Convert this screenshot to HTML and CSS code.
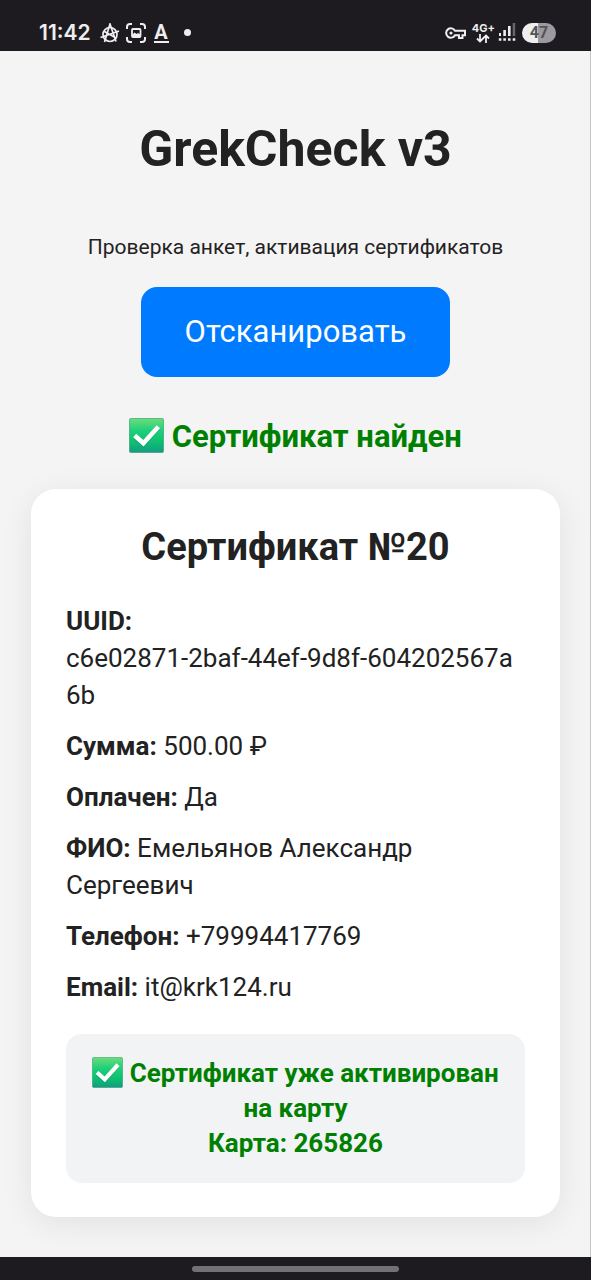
FILE: index.html
```html
<!DOCTYPE html>
<html lang="ru">
<head>
<meta charset="utf-8">
<meta name="viewport" content="width=device-width, initial-scale=1">
<title>GrekCheck v3</title>
<link rel="stylesheet" href="styles.css">
</head>
<body>
<svg class="defs" aria-hidden="true">
  <defs>
    <linearGradient id="check-fill" x1="0" y1="0" x2="0" y2="1">
      <stop offset="0" stop-color="#6ddc7a"/>
      <stop offset="0.35" stop-color="#1fd07b"/>
      <stop offset="0.7" stop-color="#0cc070"/>
      <stop offset="1" stop-color="#159a84"/>
    </linearGradient>
    <symbol id="check" viewBox="0 0 34 34">
      <rect x="0.5" y="0.5" width="33" height="33" rx="1.5" fill="url(#check-fill)" stroke="#2a9a68" stroke-opacity="0.6"/>
      <path d="M5.5 18.5 14 26 28.5 9.5" fill="none" stroke="#0b9862" stroke-width="4.5" opacity="0.5"/>
      <path d="M5.5 17 14 24.5 28.5 8.5" fill="none" stroke="#fff" stroke-width="4.5"/>
    </symbol>
  </defs>
</svg>

<header class="statusbar">
  <div class="statusbar-group">
    <span class="clock">11:42</span>
    <svg width="20" height="20" viewBox="0 0 20 20" fill="none" stroke="#eee" stroke-width="1.7">
      <circle cx="10" cy="11.500" r="7"/>
      <path d="M4.500 19 10 1 16 18.500M.5 14.500 19 8M3.500 8 16 15"/>
    </svg>
    <svg width="20" height="20" viewBox="0 0 20 20" fill="none" stroke="#eee" stroke-width="2">
      <path d="M1 6V4a3 3 0 0 1 3-3h2M14 1h2a3 3 0 0 1 3 3v2M19 14v2a3 3 0 0 1-3 3h-2M6 19H4a3 3 0 0 1-3-3v-2"/>
      <rect x="6" y="6" width="8.500" height="8" rx="1" stroke-width="1.800"/>
      <path d="M6 14v-2l2.500-2.500 2 1.500 1.500-1 2.500 1.500V14z" fill="#eee" stroke="none"/>
    </svg>
    <span class="letter">A</span>
    <span class="dot"></span>
  </div>
  <div class="statusbar-group">
    <svg width="21" height="14" viewBox="0 0 21 14" fill="none" stroke="#eee" stroke-width="2">
      <path d="M10 4.800A4.700 4.700 0 1 0 10 9.200h4V12h3.500V9.200H20V4.800z"/>
      <circle cx="6" cy="7" r="1.600" fill="#eee" stroke="none"/>
    </svg>
    <div class="network">
      <span class="network-label">4G+</span>
      <svg width="14" height="9" viewBox="0 0 14 9" fill="none" stroke="#eee" stroke-width="1.800">
        <path d="M4 0v7M1 4.500 4 7.500l3-3M10 9V2M7 4.500l3-3 3 3"/>
      </svg>
    </div>
    <svg class="icon-signal" width="18" height="19" viewBox="0 0 18 19" fill="#eee">
      <path d="M1 10h2v3H1zM5.300 7h2.600v6H5.300zM10 3h2.600v10H10z"/>
      <path d="M14.700 0h2.500v13h-2.500z" fill="#67656b"/>
      <path d="M.8 15.200h2.600v2.600H.8zM5.300 15.200h2.600v2.600H5.300zM10 15.200h2.600v2.600H10zM14.700 15.200h2.600v2.600h-2.600z"/>
    </svg>
    <span class="battery">47</span>
  </div>
</header>

<main class="page">
  <h1 class="title">GrekCheck v3</h1>
  <p class="subtitle">Проверка анкет, активация сертификатов</p>
  <button class="scan" type="button">Отсканировать</button>
  <p class="result"><svg class="check check-large" role="img" aria-label="Готово"><use href="#check"/></svg> Сертификат найден</p>

  <section class="card">
    <h2 class="card-title">Сертификат №20</h2>
    <p class="row"><strong>UUID:</strong> <span class="uuid">c6e02871-2baf-44ef-9d8f-604202567a6b</span></p>
    <p class="row"><strong>Сумма:</strong> 500.00 ₽</p>
    <p class="row"><strong>Оплачен:</strong> Да</p>
    <p class="row"><strong>ФИО:</strong> Емельянов Александр Сергеевич</p>
    <p class="row"><strong>Телефон:</strong> +79994417769</p>
    <p class="row"><strong>Email:</strong> it@krk124.ru</p>
    <div class="notice"><svg class="check" role="img" aria-label="Готово"><use href="#check"/></svg> Сертификат уже активирован на карту<br>Карта: 265826</div>
  </section>
</main>

<footer class="navbar"><span class="handle"></span></footer>
</body>
</html>
```

FILE: styles.css
```css
* {
  box-sizing: border-box;
}

body {
  display: flex;
  flex-direction: column;
  min-height: 100vh;
  margin: 0;
  background: #f4f4f4;
  color: #222;
  font-family: Roboto, "Noto Sans", sans-serif;
  font-size: 26px;
  line-height: 37px;
}

h1, h2, p {
  margin: 0;
}

.defs {
  position: absolute;
  width: 0;
  height: 0;
}

.statusbar {
  display: flex;
  justify-content: space-between;
  align-items: center;
  height: 51px;
  padding: 14px 35px 0 39px;
  background: #1e1b20;
  color: #eee;
  line-height: 24px;
}

.statusbar-group {
  display: flex;
  align-items: center;
  gap: 6px;
}

.clock {
  margin-right: 3px;
  font-family: Inter, Roboto, sans-serif;
  font-size: 21px;
  font-weight: 600;
}

.letter {
  width: 15px;
  margin: 0 9px 0 2px;
  border-bottom: 2px solid #eee;
  font-size: 20px;
  font-weight: 700;
  line-height: 18px;
  text-align: center;
}

.dot {
  width: 7px;
  height: 7px;
  border-radius: 50%;
  background: #eee;
}

.network {
  display: flex;
  flex-direction: column;
  align-items: center;
}

.network-label {
  font-family: Inter, Roboto, sans-serif;
  font-size: 11px;
  font-weight: 700;
  line-height: 11px;
}

.icon-signal {
  margin-left: -3px;
}

.battery {
  width: 34px;
  height: 20px;
  border-radius: 10px;
  background: linear-gradient(90deg, #eee 47%, #9c9a9e 47%);
  color: #555358;
  font-size: 16px;
  font-weight: 700;
  line-height: 20px;
  text-align: center;
}

.page {
  display: flex;
  flex: 1;
  flex-direction: column;
  align-items: center;
  padding: 68px 31px 40px;
  box-shadow: inset -1px 0 #c4c4c4;
}

.title {
  font-size: 50px;
  font-weight: 700;
  line-height: 60px;
}

.subtitle {
  margin-top: 56px;
  font-size: 21px;
  line-height: 24px;
  text-align: center;
}

.scan {
  margin-top: 28px;
  padding: 26px 44px;
  border: 0;
  border-radius: 16px;
  background: #007bff;
  color: #fff;
  font-family: inherit;
  font-size: 31px;
  line-height: 38px;
}

.result {
  margin-top: 41px;
  color: green;
  font-size: 31px;
  font-weight: 700;
  line-height: 38px;
  text-align: center;
}

.check {
  width: 31px;
  height: 31px;
  vertical-align: -6px;
}

.check-large {
  width: 35px;
  height: 35px;
}

.card {
  width: 100%;
  margin-top: 33px;
  padding: 36px 35px 34px;
  border-radius: 25px;
  background: #fff;
  box-shadow: 0 6px 32px rgba(0, 0, 0, 0.08);
}

.card-title {
  margin-bottom: 33px;
  font-size: 38px;
  font-weight: 700;
  line-height: 45px;
  text-align: center;
}

.row {
  margin-bottom: 14px;
  overflow-wrap: anywhere;
}

.uuid {
  display: block;
  word-break: break-all;
}

.notice {
  margin-top: 28px;
  padding: 22px 20px;
  border-radius: 16px;
  background: #f1f3f5;
  color: green;
  font-weight: 700;
  line-height: 35px;
  text-align: center;
}

.navbar {
  display: flex;
  justify-content: center;
  align-items: center;
  height: 23px;
  background: #1e1b20;
}

.handle {
  width: 35%;
  height: 6px;
  border-radius: 3px;
  background: #727074;
}
```
